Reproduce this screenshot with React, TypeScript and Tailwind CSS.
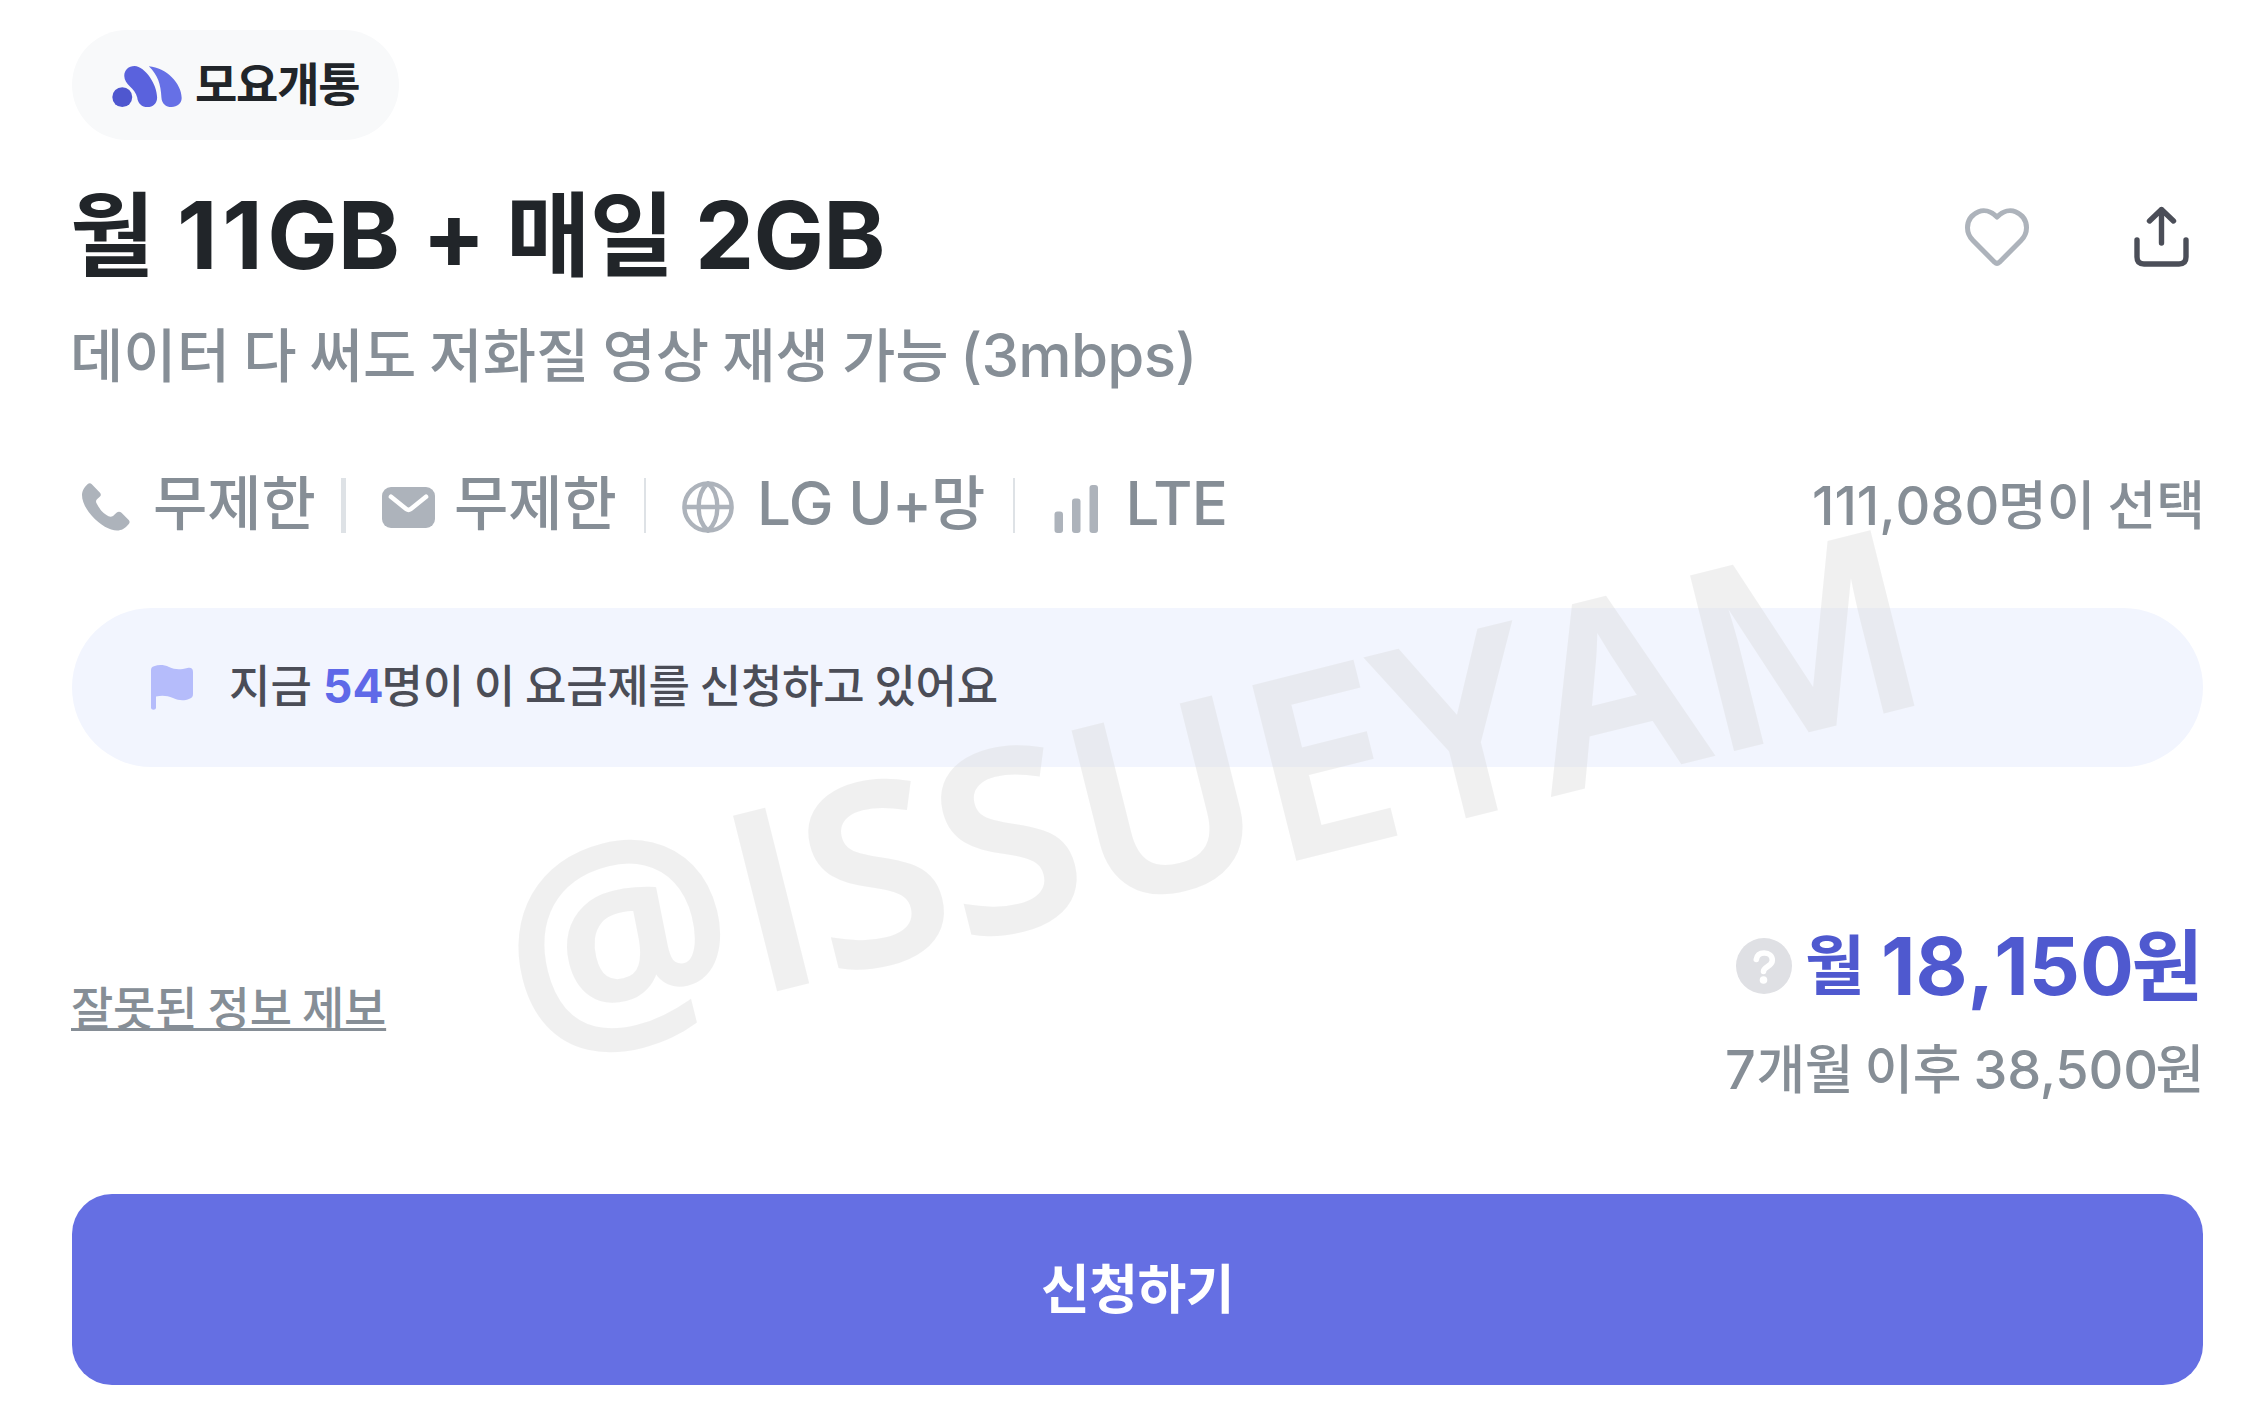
import type { ReactNode } from "react";

type RunProps = { className?: string; children: ReactNode };

/* Hangul and Latin runs use separate faces so each keeps its own size and tracking. */
function Ko({ className = "", children }: RunProps) {
  return (
    <span className={"shrink-0 whitespace-pre leading-none font-['Noto_Sans_CJK_KR',sans-serif] " + className}>
      {children}
    </span>
  );
}

function En({ className = "", children }: RunProps) {
  return (
    <span className={"shrink-0 whitespace-pre leading-none font-['Inter',sans-serif] " + className}>{children}</span>
  );
}

function Logo() {
  return (
    <svg className="mt-[35px] h-[43px] w-[70px] shrink-0" viewBox="186 165 211 128">
      <circle cx="217" cy="261" r="30" fill="#4f57cf" />
      <path
        fill="#5a62dd"
        d="M223 197C223 179 236 167 254 167C286 169 322 222 322 262C322 280 309 291 293 291C276 291 264 280 262 262C256 232 223 224 223 197Z"
      />
      <path
        fill="#6670e6"
        d="M297 168C350 172 396 220 396 264C396 281 382 291 366 291C348 291 336 280 335 262C333 222 324 194 297 168Z"
      />
    </svg>
  );
}

function Heart() {
  return (
    <svg className="mt-[25px] h-[59px] w-[64px]" viewBox="0 0 64 59" fill="none" stroke="#adb3bb" strokeWidth="5" strokeLinejoin="round">
      <path d="M32 9C25.5 2.5 18.5 1.6 13.5 3.8C6 7 2.5 13.3 2.5 19.8C2.5 25 4.5 29 8 32.6L29.6 54.2Q32 56.4 34.4 54.2L56 32.6C59.5 29 61.5 25 61.5 19.8C61.5 13.3 58 7 50.5 3.8C45.5 1.6 38.5 2.5 32 9Z" />
    </svg>
  );
}

function Share() {
  return (
    <svg className="mt-[23px] h-[61px] w-[55px]" viewBox="0 0 55 61" fill="none" stroke="#4b4e58" strokeWidth="5.4" strokeLinecap="round" strokeLinejoin="round">
      <path d="M27.5 4V37" />
      <path d="M15.5 15L27.5 3.5L39.5 15" />
      <path d="M22 10L27.5 4L33 10Z" fill="#4b4e58" stroke="none" />
      <path d="M3 34V51Q3 58 10 58H45Q52 58 52 51V34" />
    </svg>
  );
}

function Phone() {
  return (
    <svg className="mt-[13px] ml-[10px] h-[48px] w-[48px] shrink-0" viewBox="0 0 48 48" fill="#adb3bb">
      <path d="M0 12C0 7.5 3 3.5 5.5 1.2C7-.1 8.5-.1 9.8 1.2L18 9.8C19.1 11 19.1 12.3 18 13.5L15 16.3C13.9 17.5 13.8 18.7 14.4 20.1C17 26 22 31 26.5 33.3C28 34 29.5 34 31 33L34.5 29.8C36 28.5 38 28.5 39.5 29.8L46.7 37C47.9 38.3 47.9 39.7 46.8 41C43 45.5 39.5 47.5 35 47.5C28 47.5 18 42 10 33C3 25 0 18 0 12Z" />
    </svg>
  );
}

function Mail() {
  return (
    <svg className="mt-[17px] ml-[36px] h-[41px] w-[53px] shrink-0" viewBox="0 0 53 41">
      <rect width="53" height="41" rx="9" fill="#adb3bb" />
      <path d="M9 9.800L24.500 22.200Q26.500 23.600 28.500 22.200L44 9.800" fill="none" stroke="#fff" strokeWidth="4.6" strokeLinecap="round" />
    </svg>
  );
}

function Globe() {
  return (
    <svg className="mt-[11px] ml-[36px] h-[52px] w-[52px] shrink-0" viewBox="0 0 52 52" fill="none" stroke="#adb3bb" strokeWidth="4.4">
      <circle cx="26" cy="26" r="23.6" />
      <path d="M26 2.4C13.500 13 13.500 39 26 49.6C38.500 39 38.500 13 26 2.4ZM2.4 26H49.6" />
    </svg>
  );
}

function Bars() {
  return (
    <svg className="mt-[15px] ml-[39px] h-[48px] w-[45px] shrink-0" viewBox="0 0 45 48" fill="#adb3bb">
      <rect x="0.5" y="26.5" width="8.5" height="21.5" rx="3" />
      <rect x="18" y="13.5" width="8.5" height="34.5" rx="3" />
      <rect x="35.5" y="0" width="8.5" height="48" rx="3" />
    </svg>
  );
}

function Flag() {
  return (
    <svg className="mt-[57px] ml-[79px] h-[45px] w-[42px] shrink-0" viewBox="0 0 42 45" fill="#b5bcfb">
      <path d="M0 5C0 3 1 2 3 1.3C8-.6 13-.2 18 2C24 4.7 29 4.8 36.5 3C40 2.2 42 3.500 42 7V29C42 31.5 41 32.7 38.500 33.7C33 36 28 35.6 22 33C16 30.500 11 30.300 5 31.500V42.500C5 45.500 0 45.500 0 42.500Z" />
    </svg>
  );
}

function Help() {
  return (
    <svg className="mt-[16px] h-[56px] w-[56px] shrink-0" viewBox="0 0 56 56">
      <circle cx="28" cy="28" r="28" fill="#dfe0e4" />
      <path d="M20.300 21.500C21 16.800 24.500 15 28.200 15C33 15 36.300 18 36.300 22.200C36.300 28.500 27.500 28.500 27.500 33.500" fill="none" stroke="#fff" strokeWidth="5.6" strokeLinecap="round" />
      <circle cx="27.5" cy="42" r="3.8" fill="#fff" />
    </svg>
  );
}

export default function App() {
  return (
    <main className="relative flex h-[1416px] w-[2247px] flex-col overflow-hidden bg-white pt-[30px] pr-[44px] pl-[72px] text-[#868e96]">
      <div className="flex h-[110px] w-[327px] shrink-0 rounded-full bg-[#f8f9fa] pl-[40px]">
        <Logo />
        <Ko className="mt-[28px] ml-[13px] text-[46px] font-bold tracking-[-1.2px] text-[#212529]">모요개통</Ko>
      </div>

      <div className="mt-[43px] flex h-[92px] shrink-0 justify-between">
        <h1 className="-ml-[2px] flex items-baseline font-bold text-[#212529]">
          <Ko className="w-[107px] text-[92px]">월</Ko>
          <En className="w-[245px] text-[94px]">
            <span className="tracking-[4.6px]">11</span>GB
          </En>
          <En className="w-[84px] text-[94px]">+</En>
          <Ko className="w-[189px] text-[92px] tracking-[-1px]">매일</Ko>
          <En className="text-[94px] tracking-[-0.7px]">2GB</En>
        </h1>
        <div className="flex gap-[105px] pr-[14px]">
          <Heart />
          <Share />
        </div>
      </div>

      <p className="mt-[48px] -ml-[2px] flex h-[58px] shrink-0 items-baseline font-medium">
        <Ko className="w-[890px] text-[58px]">데이터 다 써도 저화질 영상 재생 가능</Ko>
        <En className="text-[60px] tracking-[-0.7px]">(3mbps)</En>
      </p>

      <div className="mt-[89px] flex h-[63px] shrink-0 items-start font-medium">
        <Phone />
        <Ko className="ml-[23px] w-[188px] text-[59px]">무제한</Ko>
        <i className="mt-[8px] h-[55px] w-[5px] shrink-0 bg-[#dee2e6]" />
        <Mail />
        <Ko className="ml-[19px] w-[190px] text-[59px]">무제한</Ko>
        <i className="mt-[8px] h-[55px] w-[2px] shrink-0 bg-[#dee2e6]" />
        <Globe />
        <div className="ml-[23px] flex items-baseline">
          <En className="w-[174px] text-[60px] tracking-[-0.6px]">LG U+</En>
          <Ko className="w-[82px] text-[59px]">망</Ko>
        </div>
        <i className="mt-[8px] h-[55px] w-[2px] shrink-0 bg-[#dee2e6]" />
        <Bars />
        <En className="mt-[3px] ml-[26.5px] text-[60px] tracking-[-0.6px]">LTE</En>
        <div className="mt-[6px] ml-auto flex items-baseline">
          <En className="w-[186px] text-[54px] [font-kerning:none]">111,080</En>
          <Ko className="w-[205px] text-[53px]">명이 선택</Ko>
        </div>
      </div>

      <div className="mt-[75px] flex h-[159px] shrink-0 rounded-full bg-[#f2f5fe] font-medium text-[#4b4d57]">
        <Flag />
        <p className="mt-[53px] ml-[36px] flex items-baseline">
          <Ko className="w-[94px] text-[45px]">지금</Ko>
          <En className="w-[58.5px] text-[46px] font-bold text-[#5f69e8]">54</En>
          <Ko className="text-[45px] tracking-[-0.2px]">명이 이 요금제를 신청하고 있어요</Ko>
        </p>
      </div>

      <div className="mt-[155px] flex h-[171px] shrink-0 items-start justify-between font-medium">
        <a className="mt-[60px] flex">
          <Ko className="-ml-[1px] text-[46px] tracking-[-0.2px] underline decoration-[3px] underline-offset-[3px] [text-decoration-skip-ink:none]">
            잘못된 정보 제보
          </Ko>
        </a>
        <div className="flex flex-col items-end">
          <div className="flex h-[78px] items-start font-bold text-[#4f59cf]">
            <Help />
            <Ko className="mt-[7px] ml-[13px] w-[76px] text-[65px]">월</Ko>
            <div className="flex items-baseline">
              <En className="w-[250.5px] text-[80px] [font-kerning:none]">18,150</En>
              <Ko className="w-[71.5px] text-[78px]">원</Ko>
            </div>
          </div>
          <div className="mt-[40px] flex items-baseline">
            <En className="w-[31.5px] text-[54px]">7</En>
            <Ko className="w-[217px] text-[53px] tracking-[-0.5px]">개월 이후</Ko>
            <En className="w-[182px] text-[54px] tracking-[-0.2px]">38,500</En>
            <Ko className="w-[47.5px] text-[53px]">원</Ko>
          </div>
        </div>
      </div>

      <button className="mt-[101px] flex h-[191px] shrink-0 justify-center rounded-[40px] bg-[#656fe3] pt-[66px] text-white">
        <Ko className="text-[53px] font-bold tracking-[-0.5px]">신청하기</Ko>
      </button>

      <div className="pointer-events-none absolute top-[763px] left-[521px] flex origin-[257px_226px] -rotate-[14.1deg] items-baseline font-['Open_Sans',sans-serif] leading-none font-semibold whitespace-nowrap text-[#dadada] opacity-38 [-webkit-text-stroke:4px_#dadada]">
        <span className="text-[255px] tracking-[5.7px]">@</span>
        <span className="text-[248px] tracking-[0.7px]">ISSUEYAM</span>
      </div>
    </main>
  );
}
